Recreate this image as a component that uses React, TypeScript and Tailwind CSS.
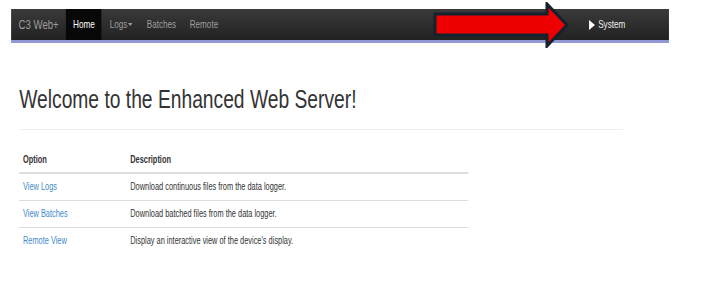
import React from 'react';

const FONT = { fontFamily: '"Liberation Sans", Arial, sans-serif' };

const ROWS = [
  { option: 'View Logs', description: 'Download continuous files from the data logger.' },
  { option: 'View Batches', description: 'Download batched files from the data logger.' },
  { option: 'Remote View', description: "Display an interactive view of the device's display." },
];

// red callout arrow pointing at the System menu
const Arrow: React.FC = () => (
  <svg className="absolute left-[433px] top-[2px]" width="136" height="46" viewBox="0 0 136 46">
    <polygon
      points="2,12 114,12 114,2 134,23 114,44 114,33 2,33"
      fill="#ee0000"
      stroke="#13222e"
      strokeWidth="3"
    />
  </svg>
);

export default function App() {
  return (
    <div className="relative w-[708px] h-[297px] bg-white overflow-hidden text-[#333]" style={FONT}>
      {/* the screenshot is squeezed horizontally, so the page is laid out wide and scaled down */}
      <div className="w-[957px] origin-top-left scale-x-[0.74]">
        {/* Navbar */}
        <div className="pt-[9px] pl-[15px]">
          <div className="w-[889px] h-[34px] flex items-stretch bg-gradient-to-b from-[#3a3a3a] to-[#222] border-b-[3px] border-[#9297d4]">
            <div className="pl-[10px] pr-[10px] flex items-center text-[13px] text-[#9d9d9d]">C3 Web+</div>
            <div className="w-[48px] flex items-center justify-center bg-[#080808] text-white text-[11px]">Home</div>
            <div className="flex items-center text-[11px] text-[#9d9d9d] ml-[11px]">
              <span className="flex items-center w-[50px]">
                Logs
                <span className="ml-[1px] inline-block w-0 h-0 border-l-[3px] border-r-[3px] border-t-[3px] border-l-transparent border-r-transparent border-t-[#9d9d9d]" />
              </span>
              <span className="w-[58px]">Batches</span>
              <span>Remote</span>
            </div>
            <div className="ml-auto mr-[59px] flex items-center text-[11px] text-[#eee] gap-[4px]">
              <span className="inline-block w-0 h-0 border-t-[5px] border-b-[5px] border-l-[8px] border-t-transparent border-b-transparent border-l-white" />
              <span>System</span>
            </div>
          </div>
        </div>

        {/* Content */}
        <div className="pl-[26px] w-[842px]">
          <h1 className="mt-[40px] text-[26px] leading-[32px] text-[#333]">Welcome to the Enhanced Web Server!</h1>
          <div className="mt-[14px] border-t border-[#eee]" />

          <table className="mt-[16px] w-[607px] text-[10px] border-collapse">
            <thead>
              <tr className="border-b-2 border-[#ddd]">
                <th className="text-left font-bold px-[5px] h-[27px] w-[145px]">Option</th>
                <th className="text-left font-bold px-[5px]">Description</th>
              </tr>
            </thead>
            <tbody>
              {ROWS.map((row, i) => (
                <tr key={row.option} className={i < ROWS.length - 1 ? 'border-b border-[#ddd]' : ''}>
                  <td className="px-[5px] h-[27px] text-[#428bca]">{row.option}</td>
                  <td className="px-[5px]">{row.description}</td>
                </tr>
              ))}
            </tbody>
          </table>
        </div>
      </div>

      <Arrow />
    </div>
  );
}
